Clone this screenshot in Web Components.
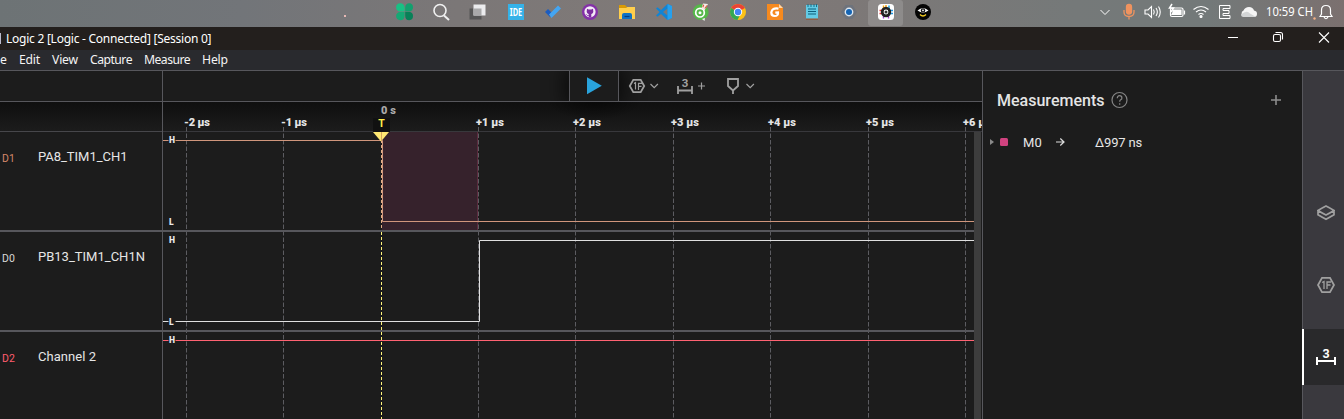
<!DOCTYPE html>
<html lang="en">
<head>
<meta charset="utf-8">
<title>Logic 2</title>
<style>
html,body{margin:0;height:419px;overflow:hidden;background:#1c1c1c;font-family:Roboto,"Liberation Sans",sans-serif;color:#e6e6e6}
</style>
</head>
<body>
<logic-desktop></logic-desktop>
<script>
const define = (name, html, after) => {
  const tpl = document.createElement('template');
  tpl.innerHTML = html;
  customElements.define(name, class extends HTMLElement {
    constructor() { super(); this.attachShadow({mode: 'open'}).append(tpl.content.cloneNode(true)); }
    connectedCallback() { if (after) after(this, this.shadowRoot); }
  });
};

/* A single-line label that tracks its letters to reach a given width. */
define('fit-text', `<style>:host{display:inline-block;white-space:pre;flex:none}span{display:inline-block}</style><span><slot></slot></span>`, (el, root) => {
  const w = +el.getAttribute('w'), s = root.querySelector('span'), n = el.textContent.length;
  const nat = s.getBoundingClientRect().width;
  if (w && nat) s.style.letterSpacing = ((w - nat) / n).toFixed(3) + 'px';
});

const ICONS = {
  clover: `<g transform="translate(-.7 -.3)"><path d="M9 8.800H5A4 4 0 0 1 .8 4.500A4 4 0 0 1 5 .5Q9 .5 9.300 5v3.800z" fill="#18c184"/><path d="M9.900 8.800h4A4 4 0 0 0 17.700 4.500A4 4 0 0 0 14 .5Q10 .5 9.900 5z" fill="#12a06e"/><path d="M9.300 9.400H5A4 4 0 0 0 .8 13.500A4 4 0 0 0 5 17.500Q9 17.500 9.300 13z" fill="#15a874"/><path d="M9.900 9.400h4.100a4 4 0 0 1 3.700 4A4 4 0 0 1 14 17.500Q10 17.500 9.900 13z" fill="#078158"/></g>`,
  search: `<g transform="translate(-1 0)" fill="none" stroke="#f0f0f0" stroke-width="1.600"><circle cx="8" cy="7.500" r="6"/><path d="M12 12.500l5 4.500" stroke-width="2"/></g>`,
  desk: `<g transform="translate(-1.500 -.5)"><path d="M1 6h12v11H1z" fill="#565656"/><path d="M5 2h12v11H5z" fill="#ececee"/><path d="M5 6h8v7H5z" fill="#a9a9aa"/></g>`,
  ide: `<path d="M1 1h16v16H1z" fill="#35b2e8"/><text x="9" y="12.500" text-anchor="middle" font-family="Noto Sans" font-weight="700" font-size="10" textLength="12.500" lengthAdjust="spacingAndGlyphs" fill="#fff">IDE</text>`,
  todo: `<path d="M1 9l3-3 5 5-3 3z" fill="#1c5cc0"/><path d="M5 11.500L14 2.500l3 3-9.500 9.500z" fill="#44a5f2"/>`,
  github: `<circle cx="9" cy="9" r="8" fill="#8430a8"/><circle cx="9" cy="8.800" r="5.600" fill="#f3eaf6"/><path d="M6 5.800l1.700.6h2.600l1.700-.6.3 2.900Q12 11 9 11t-3.300-2.300z" fill="#7b2c9f"/><path d="M7.700 10.500h2.600v4H7.700z" fill="#7b2c9f"/><path d="M5 11.200l1.300 1.300h1.500" stroke="#7b2c9f" stroke-width=".8" fill="none"/>`,
  folder: `<path d="M1 2h6l2 2h8v3H1z" fill="#d99a04"/><path d="M1 5h7l1.500-1H17v12H1z" fill="#ffcf4d"/><path d="M4 16v-4q0-2 2-2h6q2 0 2 2v4z" fill="#0f72c5"/><path d="M6.500 13.500h5" stroke="#073c80" stroke-width="1.200"/>`,
  code: `<path d="M12.500 1l4.500 2v12l-4.500 2L6 11 2.500 13.700 1 12.500 4.500 9 1 5.500l1.500-1.200L6 7z" fill="#1184d4"/><path d="M12.500 5.500v7L8 9z" fill="#7c7877"/><path d="M12.500 1l4.500 2v12l-4.500 2z" fill="#25a0ee"/>`,
  coc: `<circle cx="8.700" cy="9.200" r="7.900" fill="#55b848"/><circle cx="8" cy="9.700" r="4.300" fill="none" stroke="#fff" stroke-width="1.700"/><circle cx="8" cy="9.700" r="1.500" fill="#fff"/><path d="M9.500 5.500l1.500-5 5 .5-3.500 6.500z" fill="#f4eee9"/><path d="M10.800 4.300l1-2.500M12.800 5.500l2.200-3" stroke="#e15443" stroke-width="1.100"/><path d="M10 16l2.500 2 .5-3z" fill="#eee"/>`,
  chrome: `<circle cx="9" cy="9" r="8" fill="#fbc116"/><path d="M9 9L2.100 5A8 8 0 0 1 15.900 5z" fill="#ea4335"/><path d="M9 9L2.100 5A8 8 0 0 0 8.500 17L11.500 11z" fill="#34a853"/><circle cx="9" cy="9" r="4.200" fill="#fff"/><circle cx="9" cy="9" r="3.200" fill="#4285f4"/>`,
  pdf: `<path d="M1 1h12l4 4v12H1z" fill="#f78a1e"/><path d="M13 1v4h4z" fill="#ffd9ac"/><path d="M12.500 5.700Q6 4.500 5.300 9.500q0 3.500 3.500 3.500t3.200-3.500L9.300 9.700" fill="none" stroke="#fff" stroke-width="2.200"/>`,
  note: `<path d="M3 2h12v14H3z" fill="#63cbe5"/><path d="M3 15.500h12v1.200H3z" fill="#9a5330"/><path d="M5 6h8M5 8.500h8M5 11h8" stroke="#0d617c" stroke-width="1.200"/><path d="M5 1v3M8 1v3M11 1v3M13.500 1v3" stroke="#17718b"/>`,
  gear: `<path d="M5.500 2h7L17 9l-4.500 7h-7L1 9z" fill="#69727e" opacity=".75"/><circle cx="9" cy="9" r="4.400" fill="#dce7f1"/><circle cx="9" cy="9" r="3" fill="#1464b4"/>`,
  logic: `<rect x="1" y="1" width="16" height="16" rx="3.500" fill="#fff"/><path d="M6.500 2.500v4M9 2v4" stroke="#f4a20b" stroke-width="1.400"/><path d="M12 2.500v4" stroke="#15a0dd" stroke-width="1.400"/><path d="M2.500 7.500h4M2.500 10.500h4" stroke="#e33" stroke-width="1.400"/><path d="M12 7.500h4M12 10.500h4" stroke="#1b97e2" stroke-width="1.400"/><path d="M6.500 12v3.500M11.500 12v3.500" stroke="#a23dd2" stroke-width="1.400"/><circle cx="9" cy="9" r="3.800" fill="#fff" stroke="#222" stroke-width="2.800"/><circle cx="9" cy="9" r="1.500" fill="#333"/>`,
  eye: `<circle cx="9" cy="9" r="8" fill="#050505"/><path d="M3.500 7.600Q9 2.400 14.500 7.600 9 11.800 3.500 7.600z" fill="#fff"/><circle cx="9" cy="7.400" r="2.200" fill="#111"/><path d="M8 7.400h2M9 6.400v2" stroke="#fff" fill="none" stroke-width=".8"/><path d="M6 11.500q3 3 6 0" fill="none" stroke="#f4cd22" stroke-width="1.400"/>`
};
define('app-icon', `<style>:host{display:flex;width:37px;height:26px;align-items:center;justify-content:center;box-sizing:border-box;padding-bottom:2px}:host([active]){width:35px;margin:0 1px;background:#ffffff24;border-radius:3px}svg{width:18px;height:18px;overflow:visible}</style><svg viewBox="0 0 18 18"></svg>`, (el, r) => {
  r.querySelector('svg').innerHTML = ICONS[el.getAttribute('kind')];
});

define('task-bar', `<style>
:host{display:flex;height:27px;background:linear-gradient(90deg,#6d7375 0,#727579 18%,#7b7777 34%,#807a78 50%,#7d7877 63%,#757979 80%,#737979 90%,#7b706f 100%);position:relative}
.apps{display:flex;margin-left:386px;width:560px}
.tray{margin-left:154px;width:244px;height:27px}
.dot{position:absolute;left:344px;top:15px;width:2px;height:2px;background:#e8b9b5}
</style>
<i class="dot"></i>
<div class="apps">${Object.keys(ICONS).map(k => `<app-icon kind="${k}"${k === 'logic' ? ' active' : ''}></app-icon>`).join('')}</div>
<svg class="tray" viewBox="1100 0 244 27" fill="none" stroke="#fff" stroke-width="1.200">
<path d="M1100.500 10l4.500 4.500 4.500-4.500" stroke-width="1"/>
<g stroke="#f0935f" stroke-width="1.300"><rect x="1126.500" y="4.500" width="5" height="9.500" rx="2.500" fill="#f0935f"/><path d="M1124 10v2q0 4.500 5 4.500t5-4.500v-2M1129 16.500v3"/></g>
<path d="M1145 10h3l3.500-3.500v11l-3.500-3.500h-3zM1153.500 9.500q1.500 2.500 0 5M1156 8q2.700 4 0 8M1158.500 6.500q3.500 5.500 0 11" stroke-width="1.100"/>
<rect x="1170.500" y="8" width="12.500" height="8.500" rx="1.500"/><path d="M1173 10h8v4.500h-9l1-2z" fill="#fff"/><path d="M1184.500 10.500v4"/><path d="M1172 4l-2.500 4h4l-2.500 4" stroke-width="1.500"/>
<path d="M1193.500 9.500q7.500-6 15 0M1196 12q5-4 10 0M1198.500 14.500q2.500-2 5 0"/><circle cx="1201" cy="16.500" r="1" fill="#fff"/>
<path d="M1230 5.500h-10.500v13H1230v-3h-7v-2h6v-3h-6v-2h7z" stroke-width="1"/>
<path d="M1244 17a3.500 3.500 0 0 1-.5-6.500q1.500-3.500 5.500-3.500 4 0 5 3.500 3 .5 3 3.300 0 3.200-3 3.200z" fill="#f5f5f5" stroke="none"/><path d="M1241 14.500q6-5 9-1l6 3.500H1244q-3 0-3-2.500z" fill="#d3d5d6" stroke="none"/>
<text x="1266" y="16.300" fill="#fff" stroke="none" font-family="Noto Sans" font-size="12.300" textLength="47" lengthAdjust="spacingAndGlyphs">10:59 CH</text>
<circle cx="1314.500" cy="18.500" r="1.200" fill="#f5b184" stroke="none"/>
<path d="M1320 16.500l1.500-2.500v-4q0-4.500 4.500-4.500t4.500 4.500v4l1.500 2.500zM1324 17q2 3.500 4 0"/>
</svg>`);

define('title-bar', `<style>
:host{display:flex;height:23px;background:#231f1d;align-items:center;justify-content:space-between;font:12px "Noto Sans",sans-serif;color:#fff}
.name{display:flex;align-items:center;gap:5px}.mark{width:1px;height:11px;background:#bbc}
svg{width:120px;height:23px}fit-text{line-height:23px}
</style><div class="name"><i class="mark"></i><fit-text w="205.300">Logic 2 [Logic - Connected] [Session 0]</fit-text></div>
<svg viewBox="1224 27 120 23" fill="none" stroke="#fff" stroke-width="1.100"><path d="M1228 37.500h10M1319 32.500l10 10M1329 32.500l-10 10"/><rect x="1273.500" y="34.500" width="7" height="7" rx="1.500"/><path d="M1275.500 32.500h5q2 0 2 2v5"/></svg>`);

define('menu-bar', `<style>
:host{display:flex;height:20px;background:#292a2e;border-bottom:1px solid #57575c;font:12.200px/19px "Noto Sans",sans-serif;color:#f4f4f4;overflow:hidden}
.f{margin-left:-13px}fit-text{margin-right:12px}
</style><fit-text class="f" w="20">File</fit-text><fit-text w="21">Edit</fit-text><fit-text w="26">View</fit-text><fit-text w="42">Capture</fit-text><fit-text w="46">Measure</fit-text><fit-text w="26">Help</fit-text>`);

define('tool-bar', `<style>
:host{display:flex;height:30px;border-bottom:1px solid #57575c;background:#1c1c1c;position:relative}
.run{box-sizing:border-box;margin-left:406px;width:50px;height:30px;border:solid #57575c;border-width:0 1px;background:#1c1c1c;box-shadow:0 0 20px 5px #0009;clip-path:inset(0 -40px 0 -40px);display:flex;align-items:center;justify-content:center}
.tools{position:relative;width:150px;height:30px}
</style><div class="run"><svg width="16" height="18"><path d="M1 .3v17L15.800 8.800z" fill="#29a3dc"/></svg></div>
<svg class="tools" viewBox="619 71 150 30" fill="none" stroke="#a0a0a0" stroke-width="1.800">
<path d="M633.300 79.800h7.400l3.500 6.200-3.500 6.200h-7.400l-3.500-6.200z"/><path d="M634 83.500l1.500-1V89.500M638.500 90V83.300h3.500M638.500 86.300h3" stroke-width="1.200"/>
<path d="M650.500 84l3.700 3.700 3.700-3.700M746.500 84l3.700 3.700 3.700-3.700" stroke-width="1.200"/>
<text x="685" y="87" text-anchor="middle" fill="#a0a0a0" stroke="none" font-family="Roboto" font-weight="700" font-size="11.500">3</text>
<path d="M678 86v8M692 86v8M678 90.500h14"/><path d="M701.500 82.500v7M698 86h7" stroke-width="1.200"/>
<path d="M728 79h10v7l-5 4.500-5-4.500zM733 90v4"/></svg>`);

define('channel-row', `<style>
:host{display:flex;height:98px;border-bottom:2px solid #57575c;box-sizing:content-box;font-size:13px;align-items:flex-start;padding-left:2px}
.id{width:36px;font-size:10.500px;line-height:14px;margin-top:20px;color:var(--tone)}
.nm{line-height:18px;margin-top:16px}
</style><div class="id"><slot name="id"></slot></div><div class="nm"><slot></slot></div>`);

define('channel-list', `<style>
:host{display:block;width:162px;height:348px;border-right:1px solid #57575c;overflow:hidden}
.a{height:30px;border-bottom:1px solid #57575c}.b{height:29px;border-bottom:1px solid #47474b;background:linear-gradient(#0f0f0f,#1c1c1c)}
</style><div class="a"></div><div class="b"></div>
<channel-row style="--tone:#d5886a"><span slot="id">D1</span><fit-text w="89.500">PA8_TIM1_CH1</fit-text></channel-row>
<channel-row style="--tone:#d8d8d8"><span slot="id">D0</span><fit-text w="107">PB13_TIM1_CH1N</fit-text></channel-row>
<channel-row style="--tone:#ff5c6e"><span slot="id">D2</span><fit-text w="58">Channel 2</fit-text></channel-row>`);

/* Plot area: time ruler, digital traces, trigger marker and measured span. */
const xs = [186, 283, 381, 478, 575, 673, 770, 868, 965];
const ticks = xs.map((x, i) => i === 2 ? '' : `<path d="M${x}.5 127v292"/>`).join('');
const labels = xs.map((x, i) => i === 2 ? '' : `<text x="${x - 2}" y="125.500" textLength="${i < 2 ? 26 : 28}">${i < 2 ? '-' : '+'}${Math.abs(i - 2)} µs</text>`).join('');
const lv = (c, y) => `<rect x="168.500" y="${y - 4}" width="7" height="8" fill="#1c1c1c"/><text x="169" y="${y + 3}">${c}</text>`;
define('wave-plot', `<style>:host{display:block;height:317px}svg{display:block}text{font-family:Roboto,sans-serif}</style>
<svg width="819" height="317" viewBox="163 102 819 317">
<defs><linearGradient id="r" x2="0" y2="1"><stop stop-color="#0f0f0f"/><stop offset="1" stop-color="#1c1c1c"/></linearGradient>
<radialGradient id="s"><stop stop-color="#000" stop-opacity=".55"/><stop offset="1" stop-color="#000" stop-opacity="0"/></radialGradient></defs>
<path fill="#1c1c1c" d="M163 102h819v317H163z"/><path fill="url(#r)" d="M163 102h819v29H163z"/>
<ellipse cx="594" cy="100" rx="48" ry="20" fill="url(#s)"/>
<path fill="#38383c" d="M163 131h819v1H163z"/>
<path fill="#36222c" d="M382 132h96v98h-96z"/><path d="M477.500 132v98" stroke="#5b2b3e"/>
<g stroke="#5c5c61" stroke-dasharray="4.500 2">${ticks}</g>
<path fill="#57575c" d="M163 230h811v2H163zM163 330h811v2H163z"/>
<g fill="none"><path d="M163 140.500h219.500v81H974" stroke="#d0967c"/><path d="M163 321.500h316.500v-81H974" stroke="#e0e0e0"/><path d="M163 340.500h811" stroke="#ff6272"/></g>
<path d="M381.500 140v90" stroke="#e3b08a" stroke-dasharray="3 2"/><path d="M381.500 232v187" stroke="#fff27a" stroke-dasharray="3 2"/>
<g fill="#e8e8e8" font-size="8.500" font-weight="900">${lv('H', 140)}${lv('L', 222)}${lv('H', 240)}${lv('L', 322)}${lv('H', 340)}</g>
<g fill="#e4e4e4" font-size="11" font-weight="900">${labels}<text x="381" y="114" fill="#aaa" textLength="15">0 s</text></g>
<path fill="#111" d="M373 118h17v14h-17z"/><text x="381.500" y="127" text-anchor="middle" font-size="10.500" font-weight="700" fill="#ffed4a">T</text>
<path d="M373 132h16l-8 9.500z" fill="#ffe873"/><path d="M381.500 132v9" stroke="#d9a65c"/>
<path fill="#3d3d3d" d="M974 132h7v287h-7z"/>
</svg>`);

define('measure-panel', `<style>
:host{display:flex;flex-direction:column;width:319px;height:348px;border:solid #57575c;border-width:0 1px;background:#1c1c1c}
header{display:flex;align-items:center;height:30px;padding:14px 20px 0 14px}
h1{margin:0;font-size:16px;line-height:22px;font-weight:500;width:114px;padding-top:2px;color:#e4e4e4}
.add{margin-left:auto}
.row{display:flex;align-items:center;margin-top:17px;height:20px;padding-left:7px;font-size:13px}
.sw{width:8px;height:8px;border-radius:1.500px;background:#d0427f;margin:0 15px 0 6px}
.arr{margin:0 30px 0 14px}
</style><header><h1><fit-text w="107.500">Measurements</fit-text></h1>
<svg width="18" height="18" fill="none" stroke="#858585" stroke-width="1.200"><circle cx="8.500" cy="9" r="7.500"/><path d="M6.300 7.200q0-2.500 2.300-2.500t2.300 2.200q0 1.200-1.200 1.900-1 .7-1 1.900"/><path d="M8.700 12.200v1.500"/></svg>
<svg class="add" width="12" height="12" stroke="#8d8d8d" stroke-width="1.600"><path d="M6 1v10M1 6h10"/></svg></header>
<div class="row"><svg width="4" height="8"><path d="M0 1v6l4-3z" fill="#8a8a8a"/></svg><i class="sw"></i><fit-text w="19">M0</fit-text>
<svg class="arr" width="9" height="10" fill="none" stroke="#ddd" stroke-width="1.200"><path d="M0 5h7.500M4.300 1.500L8 5 4.300 8.500"/></svg><fit-text w="47">Δ997 ns</fit-text></div>`);

define('side-rail', `<style>
:host{display:flex;flex-direction:column;width:41px;height:348px;background:#3a393e}
div{height:72px;display:flex;align-items:center;justify-content:center;padding-left:4px}
.first{margin-top:106px}.on{height:56px;margin-top:8px;background:#29292b;position:relative}
.on::before{content:"";position:absolute;left:-1px;top:0;width:2px;height:56px;background:#fff}
</style>
<div class="first"><svg width="18" height="18" fill="none" stroke="#a0a0a0" stroke-width="1.700"><path d="M1 6.500Q5 4 9 2q4 2 8 4.500Q13 9 9 11 5 9 1 6.500zM1 6.500v4.300q4 2.400 8 4.400 4-2 8-4.400V6.500"/></svg></div>
<div><svg width="18" height="18" fill="none" stroke="#a0a0a0" stroke-width="1.800"><path d="M5 1.800h8L17 9l-4 7.200H5L1 9z"/><path d="M5 6.500l2-1V13M10 13V6h4M10 9h3.500" stroke-width="1.300"/></svg></div>
<div class="on"><svg width="22" height="22" viewBox="0 0 22 22" fill="none" stroke="#fff" stroke-width="2"><text x="11" y="11.800" text-anchor="middle" font-size="12.500" font-weight="700" fill="#fff" stroke="none">3</text><path d="M2 11v8M20 11v8M2 15h18"/></svg></div>`);

define('logic-desktop', `<style>
:host{display:flex;flex-direction:column;width:1344px;height:419px;overflow:hidden}
main{display:flex;height:348px}section{width:819px}
</style><task-bar></task-bar><title-bar></title-bar><menu-bar></menu-bar>
<main><channel-list></channel-list><section><tool-bar></tool-bar><wave-plot></wave-plot></section><measure-panel></measure-panel><side-rail></side-rail></main>`);
</script>
</body>
</html>
